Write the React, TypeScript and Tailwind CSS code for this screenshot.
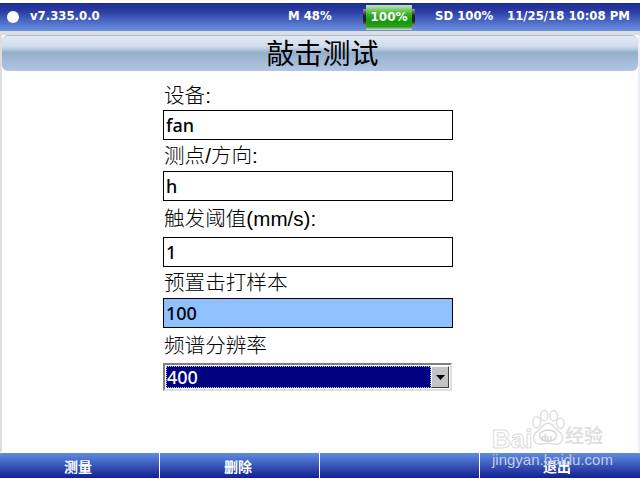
const CJK = "font-['Liberation_Sans','Noto_Sans_CJK_SC',sans-serif]";
const INPUT_FONT = "font-['Noto_Sans',sans-serif]";

function Battery() {
  return (
    <div className="relative w-[52px] h-[25px] flex items-stretch">
      <div className="w-[3px] my-[4px] bg-[linear-gradient(180deg,#9aa09a,#202420_40%,#202420_70%,#8a908a)] rounded-l-[1px]" />
      <div className="flex-1 border-y border-y-[#c8d2c2] bg-[linear-gradient(180deg,#b4e4a4_0%,#6cc85a_20%,#2ea81e_42%,#109a08_68%,#2e9c26_90%,#9cc896_100%)] flex items-center justify-center">
        <span className="text-[12px] font-bold text-white font-['DejaVu_Sans',sans-serif] leading-none">100%</span>
      </div>
      <div className="w-[3px] my-[4px] bg-[linear-gradient(180deg,#9aa09a,#202420_40%,#202420_70%,#8a908a)] rounded-r-[1px]" />
    </div>
  );
}

function Field({ label, value, gap, bg = "bg-white" }: { label: string; value: string; gap: string; bg?: string }) {
  return (
    <>
      <div className={`${gap} pl-[1px] flex items-center text-[20.6px] font-light text-black leading-none whitespace-nowrap ${CJK}`}>{label}</div>
      <div className={`h-[30px] border border-black ${bg} pl-[2px] flex items-center text-[18px] font-medium text-black ${INPUT_FONT} leading-none`}>
        {value}
      </div>
    </>
  );
}

function FooterButton({ label, last }: { label?: string; last?: boolean }) {
  return (
    <div className={`w-[160px] h-full flex items-end justify-center pb-[4px] ${last ? "pr-[6px]" : "pr-[3px] border-r border-white"} text-[14px] font-bold text-white leading-none ${CJK}`}>
      {label}
    </div>
  );
}

export default function App() {
  return (
    <div className="relative w-[640px] h-[479px] bg-white overflow-hidden flex flex-col">
      {/* status bar */}
      <div className="h-[3px] bg-white" />
      <div className="h-[28px] flex items-center bg-[linear-gradient(180deg,#1d2a94_0%,#2c3da3_30%,#4a68c4_65%,#6c93e2_100%)] text-white text-[11.7px] font-semibold font-['DejaVu_Sans',sans-serif] leading-none whitespace-nowrap">
        <div className="ml-[7px] w-[12px] h-[12px] rounded-full bg-white" />
        <span className="ml-[11px] w-[258px]">v7.335.0.0</span>
        <span className="w-[75px]">M 48%</span>
        <Battery />
        <span className="ml-[20px] w-[72px]">SD 100%</span>
        <span>11/25/18 10:08 PM</span>
      </div>
      <div className="h-[4px] bg-[#dddddd]" />

      {/* main */}
      <div className="flex-1 flex min-h-0">
        <div className="w-[2px] bg-[#dddddd]" />
        <div className="flex-1 flex flex-col">
          <div className={`h-[36px] pt-[3px] pl-[5px] rounded-[6px] border-t border-[#a9bcd8] bg-[linear-gradient(180deg,#e2e9f5_0%,#cfdbec_30%,#94aeca_48%,#a0b7d3_65%,#b0c6e2_100%)] flex items-center justify-center text-[28px] text-black leading-none ${CJK}`}>
            敲击测试
          </div>
          <div className="ml-[161px] w-[290px] flex flex-col">
            <Field label="设备:" value="fan" gap="h-[39px] pt-[11px]" />
            <Field label="测点/方向:" value="h" gap="h-[31px] pt-[1px]" />
            <Field label="触发阈值(mm/s):" value="1" gap="h-[36px]" />
            <Field label="预置击打样本" value="100" gap="h-[31px] pt-[1px]" bg="bg-[#8fc1ff]" />
            <div className={`h-[35px] pl-[1px] pt-[2px] flex items-center text-[20.6px] font-light text-black leading-none ${CJK}`}>频谱分辨率</div>
            <div className="w-[289px] h-[28px] border-2 border-t-[#808080] border-l-[#808080] border-r-[#dfdfdf] border-b-[#dfdfdf] flex bg-white p-[1px]">
              <div className={`flex-1 bg-[#000080] border border-dotted border-[#a8c8ff] text-white text-[18px] font-medium ${INPUT_FONT} leading-none flex items-center`}>
                400
              </div>
              <div className="w-[18px] bg-[#c6c3c6] border border-t-white border-l-white border-r-[#404040] border-b-[#404040] flex items-center justify-center">
                <svg width="9" height="5" viewBox="0 0 9 5"><path d="M0 0h9L4.5 5z" fill="#000" /></svg>
              </div>
            </div>
          </div>
        </div>
        <div className="w-[2px] bg-[#eeeefa]" />
      </div>

      {/* footer */}
      <div className="h-[1px] bg-white" />
      <div className="h-[25px] flex bg-[linear-gradient(180deg,#5f8ce0_0%,#4468c6_35%,#2a3fa6_70%,#12209a_100%)]">
        <FooterButton label="测量" />
        <FooterButton label="删除" />
        <FooterButton />
        <FooterButton label="退出" last />
      </div>
      <div className="h-[1px] bg-white" />

      {/* watermark */}
      <div className="absolute left-[490px] top-[408px] w-[150px] h-[60px] pointer-events-none">
        <svg className="absolute left-[40px] top-[1px]" width="36" height="40" viewBox="0 0 38 40" fill="#fff" stroke="#dcdcdc" strokeWidth="1.5">
          <ellipse cx="7" cy="13" rx="4" ry="6" />
          <ellipse cx="15" cy="6" rx="4" ry="5.5" />
          <ellipse cx="25" cy="6" rx="4" ry="5.5" />
          <ellipse cx="32" cy="14" rx="4" ry="5.5" />
          <path d="M19 14c-6 0-7 6-12 9-6 5-3 14 5 13 3 0 5-1 7-1s4 1 7 1c8 1 11-8 5-13-5-3-6-9-12-9z" />
          <ellipse cx="19" cy="27" rx="9" ry="6" stroke="#d6d6d6" />
        </svg>
        <span className="absolute left-[2px] top-[18px] text-[26px] font-bold text-white [-webkit-text-stroke:1px_#dcdcdc] font-['Liberation_Sans',sans-serif] leading-none">Bai</span>
        <span className="absolute left-[51px] top-[26px] text-[9px] font-bold text-[#d0d0d0] font-['Liberation_Sans',sans-serif] leading-none">du</span>
        <span className={`absolute left-[75px] top-[19px] text-[19px] font-bold text-[#e0e0e0] leading-none ${CJK}`}>经验</span>
        <span className="absolute left-[2px] top-[44px] text-[15px] text-[#c4cce4] font-['Liberation_Sans',sans-serif] leading-none whitespace-nowrap">jingyan.baidu.com</span>
      </div>
    </div>
  );
}
